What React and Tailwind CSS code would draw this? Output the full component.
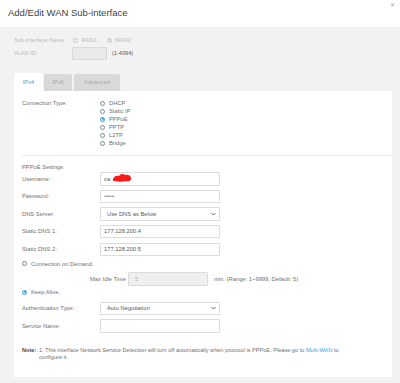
import React from "react";

function Radio({ checked = false, disabled = false }) {
  if (disabled) {
    return (
      <span className="w-[5px] h-[5px] rounded-full border border-[#c8c8c8] flex items-center justify-center shrink-0">
        {checked && <span className="w-[2px] h-[2px] rounded-full bg-[#c8c8c8]" />}
      </span>
    );
  }
  return (
    <span
      className={`w-[5px] h-[5px] rounded-full border flex items-center justify-center shrink-0 ${
        checked ? "border-[#2b9ae0]" : "border-[#7b8794]"
      }`}
    >
      {checked && <span className="w-[2px] h-[2px] rounded-full bg-[#2b9ae0]" />}
    </span>
  );
}

function Field({ label, children }) {
  return (
    <div className="flex items-center h-[13.4px]">
      <span className="w-[78px] text-[5.8px] text-[#707070]">{label}</span>
      {children}
    </div>
  );
}

function TextBox({ value, children, className = "text-[#5a5a5a]" }) {
  return (
    <div className={`relative w-[120px] h-[13.4px] border border-[#dcdcdc] rounded-[1px] bg-white flex items-center px-[3px] text-[5.8px] ${className}`}>
      {value}
      {children}
    </div>
  );
}

function SelectBox({ value }) {
  return (
    <div className="w-[120px] h-[13.4px] border border-[#dcdcdc] rounded-[1px] bg-white flex items-center justify-between pl-[6px] pr-[3px] text-[5.8px] text-[#5a5a5a]">
      <span>{value}</span>
      <svg width="5" height="4" viewBox="0 0 5 4">
        <path d="M0.5 1 L2.5 3 L4.5 1" stroke="#666" strokeWidth="1" fill="none" />
      </svg>
    </div>
  );
}

export default function App() {
  const types = ["DHCP", "Static IP", "PPPoE", "PPTP", "L2TP", "Bridge"];

  return (
    <div
      className="relative w-[400px] h-[383px] overflow-hidden bg-[#f2f2f2]"
      style={{ fontFamily: '"Liberation Sans", Arial, sans-serif' }}
    >
      {/* HEADER */}
      <div className="h-[27px] bg-white flex items-center pl-[8px]">
        <h1 className="text-[9.5px] text-[#3f3f3f]">Add/Edit WAN Sub-interface</h1>
      </div>
      <span className="absolute top-[1px] right-[5px] text-[6px] text-[#aaa]">✕</span>

      {/* SUB INTERFACE / VLAN */}
      <div className="pl-[14px] pr-[8px] pt-[9.5px]">
        <div className="flex items-center h-[7px] text-[5.6px] text-[#bcbcbc]">
          <span className="w-[59px]">Sub-Interface Name:</span>
          <Radio disabled />
          <span className="ml-[3px] w-[26px]">WAN1</span>
          <Radio disabled checked />
          <span className="ml-[3px]">WAN2</span>
        </div>
        <div className="flex items-center mt-[3.5px] h-[13px] text-[5.6px]">
          <span className="w-[58px] text-[#bcbcbc]">VLAN ID:</span>
          <div className="w-[35px] h-[13px] bg-[#e9e9e9] border border-[#dadada] rounded-[1px]" />
          <span className="ml-[5px] text-[#5a5a5a]">(1-4094)</span>
        </div>

        {/* TABS */}
        <div className="flex items-end gap-[1px] mt-[13px] h-[18px] text-[5.8px]">
          <div className="w-[29px] h-[18px] bg-white rounded-t-[2px] flex items-center justify-center text-[#3ea1e0]">IPv4</div>
          <div className="w-[28px] h-[17px] bg-[#d9d9d9] rounded-t-[2px] flex items-center justify-center text-[#ababab]">IPv6</div>
          <div className="ml-[1px] w-[46px] h-[17px] bg-[#d9d9d9] rounded-t-[2px] flex items-center justify-center text-[#ababab]">Advanced</div>
        </div>

        {/* PANEL */}
        <div className="bg-white h-[286px] pl-[8px] pt-[8px]">
          <div className="flex">
            <span className="w-[78px] text-[5.8px] text-[#707070] leading-[8px]">Connection Type:</span>
            <div className="flex flex-col">
              {types.map((t) => (
                <div key={t} className="flex items-center h-[8px] text-[5.8px] text-[#707070]">
                  <Radio checked={t === "PPPoE"} />
                  <span className="ml-[4px]">{t}</span>
                </div>
              ))}
            </div>
          </div>

          <div className="mt-[8.2px] h-px bg-[#ececec]" />

          <div className="mt-[8px] text-[5.8px] text-[#707070] leading-[7px]">PPPoE Settings</div>

          <div className="flex flex-col gap-[4.2px] mt-[1.1px]">
            <Field label="Username:">
              <TextBox value="ca">
                <svg className="absolute left-[11px] top-[0px]" width="21" height="10" viewBox="0 0 21 10">
                  <path
                    d="M1 6 C2 3 5 2 7 3 C8 1 11 0 13 2 C15 1 19 2 19 5 C20 7 17 9 14 8 C10 9 6 9 4 8 C2 8 0 8 1 6 Z"
                    fill="#ff1a1a"
                  />
                </svg>
              </TextBox>
            </Field>
            <Field label="Password:">
              <TextBox value="•••••••" className="text-[#9a9a9a] tracking-[-0.6px]" />
            </Field>
            <Field label="DNS Server:">
              <SelectBox value="Use DNS as Below" />
            </Field>
            <Field label="Static DNS 1:">
              <TextBox value="177.128.200.4" />
            </Field>
            <Field label="Static DNS 2:">
              <TextBox value="177.128.200.5" />
            </Field>
          </div>

          <div className="flex items-center h-[8px] mt-[4px] text-[5.8px] text-[#707070]">
            <Radio />
            <span className="ml-[4px]">Connection on Demand.</span>
          </div>

          <div className="flex items-center h-[13.4px] mt-[4.3px] pl-[68px] text-[5.8px] text-[#707070]">
            <span className="w-[38px]">Max Idle Time</span>
            <div className="w-[80px] h-[13.4px] bg-[#efefef] border border-[#dcdcdc] rounded-[1px] flex items-center px-[6px] text-[#b5b5b5]">5</div>
            <span className="ml-[6px]">min. (Range: 1~9999, Default: 5)</span>
          </div>

          <div className="flex items-center h-[8px] mt-[2.6px] text-[5.8px] text-[#707070]">
            <Radio checked />
            <span className="ml-[4px]">Keep Alive.</span>
          </div>

          <div className="flex flex-col gap-[4.2px] mt-[5.4px]">
            <Field label="Authentication Type:">
              <SelectBox value="Auto Negotiation" />
            </Field>
            <Field label="Service Name:">
              <TextBox value="" />
            </Field>
          </div>

          <div className="flex mt-[14.8px] text-[5.6px] leading-[7px] text-[#707070]">
            <span className="w-[17px] font-bold text-[#4a4a4a]">Note:</span>
            <p className="w-[318px]">
              1. This interface Network Service Detection will turn off automatically when protocol is PPPoE. Please go to <a className="text-[#3ea1e0]">Multi-WAN</a> to configure it.
            </p>
          </div>
        </div>
      </div>
    </div>
  );
}
